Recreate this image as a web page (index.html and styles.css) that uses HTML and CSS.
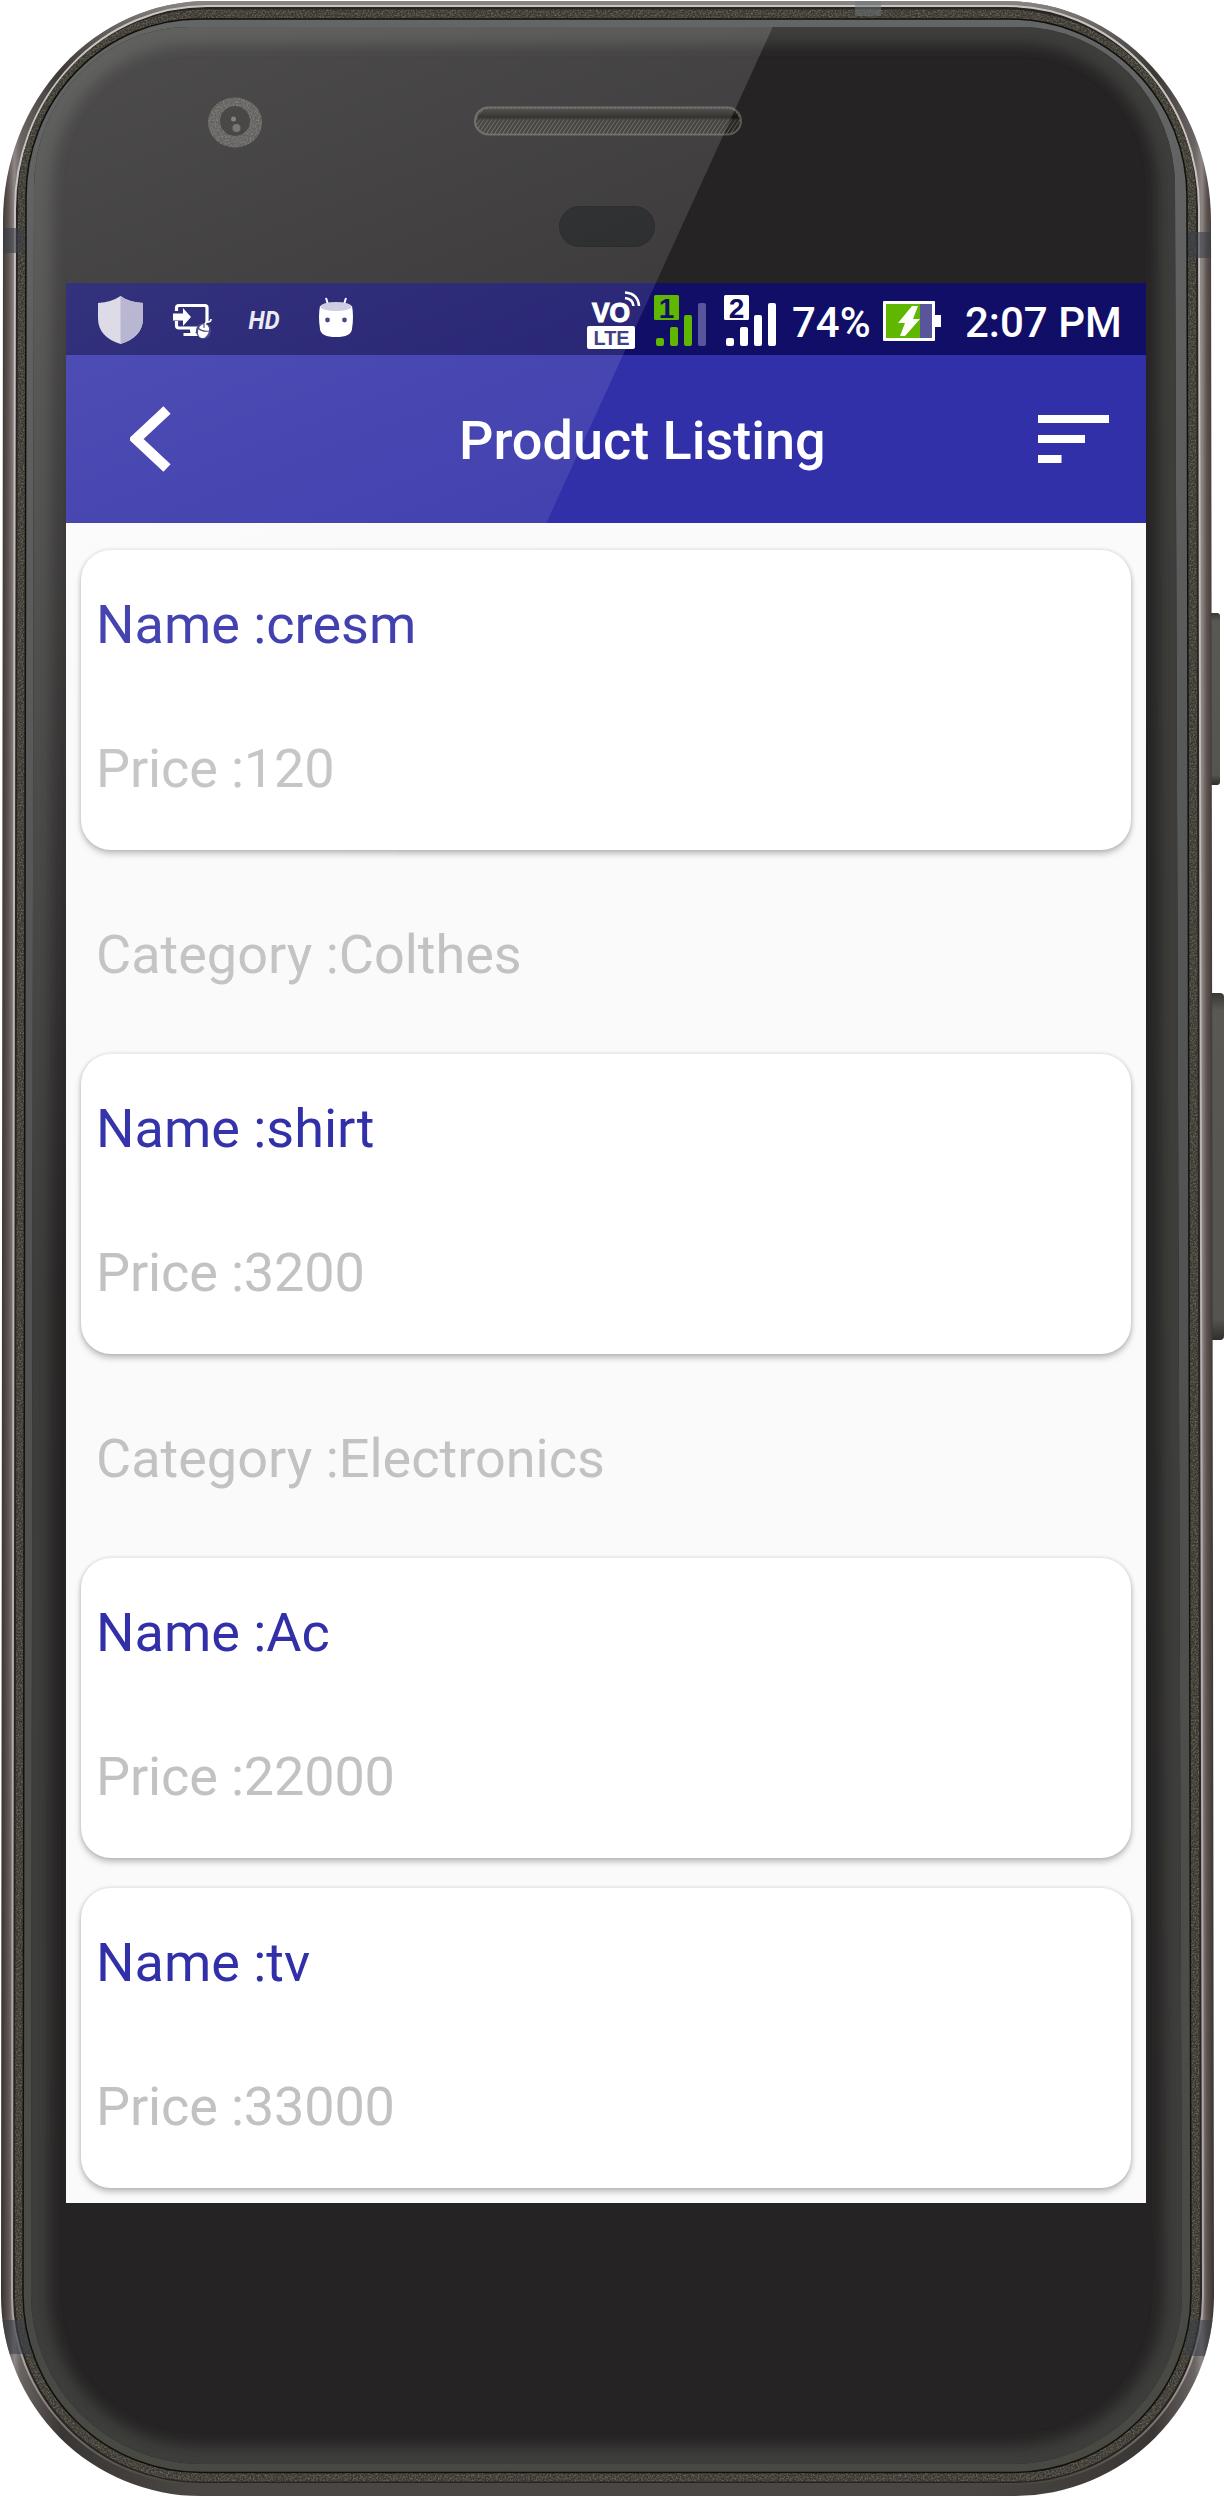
FILE: index.html
```html
<!DOCTYPE html>
<html lang="en">
<head>
<meta charset="utf-8">
<title>Product Listing</title>
<link rel="stylesheet" href="styles.css">
</head>
<body>
<div class="device">
  <svg class="device-body" viewBox="0 0 1224 2498" aria-hidden="true">
    <defs>
      <linearGradient id="metal" x1="0" x2="1" y1="0" y2="0">
        <stop offset="0" stop-color="#37322f"/><stop offset=".006" stop-color="#5d5451"/><stop offset=".011" stop-color="#8e8786"/><stop offset=".016" stop-color="#6a6463"/>
        <stop offset=".05" stop-color="#3a3633"/><stop offset=".16" stop-color="#4a4644"/><stop offset=".8" stop-color="#4a4644"/><stop offset=".95" stop-color="#3a3633"/>
        <stop offset=".984" stop-color="#6a6463"/><stop offset=".99" stop-color="#8e8786"/><stop offset=".994" stop-color="#5d5451"/><stop offset="1" stop-color="#37322f"/>
      </linearGradient>
      <linearGradient id="topShine" x1="0" x2="0" y1="0" y2="1">
        <stop offset="0" stop-color="#a09a98" stop-opacity=".75"/><stop offset=".03" stop-color="#777" stop-opacity="0"/><stop offset="1" stop-color="#2d2824" stop-opacity="0"/>
      </linearGradient>
      <linearGradient id="edge" x1="0" x2="0" y1="0" y2="1">
        <stop offset="0" stop-color="#c9c5c3"/><stop offset=".95" stop-color="#aaa5a3"/><stop offset="1" stop-color="#4a4642"/>
      </linearGradient>
      <linearGradient id="lip" x1="0" x2="0" y1="0" y2="1">
        <stop offset="0" stop-color="#646565"/><stop offset=".4" stop-color="#545555"/><stop offset="1" stop-color="#484943"/>
      </linearGradient>
      <linearGradient id="button" x1="0" x2="0" y1="0" y2="1">
        <stop offset="0" stop-color="#3a3833"/><stop offset=".05" stop-color="#595853"/><stop offset=".94" stop-color="#55544f"/><stop offset="1" stop-color="#302e2b"/>
      </linearGradient>
      <linearGradient id="grille" x1="0" x2="0" y1="0" y2="1">
        <stop offset="0" stop-color="#34322f"/><stop offset=".35" stop-color="#15120f"/><stop offset=".5" stop-color="#302e2b" stop-opacity=".4"/><stop offset="1" stop-color="#302e2b" stop-opacity="0"/>
      </linearGradient>
      <pattern id="mesh" width="4" height="6" patternUnits="userSpaceOnUse"><rect width="4" height="6" fill="#282622"/><path d="M-1 7L5-2M-5 7L1-2M3 7L9-2" stroke="#6a6662" stroke-width="1"/></pattern>
      <filter id="grain" x="0" y="0" width="100%" height="100%" color-interpolation-filters="sRGB">
        <feTurbulence type="fractalNoise" baseFrequency=".6" numOctaves="2" result="n"/>
        <feColorMatrix in="n" values="0 0 0 0 .46  0 0 0 0 .45  0 0 0 0 .4  1.8 0 0 0 -.65"/>
        <feComposite in2="SourceGraphic" operator="in" result="g"/>
        <feMerge><feMergeNode in="SourceGraphic"/><feMergeNode in="g"/></feMerge>
      </filter>
      <filter id="soft" x="-5%" y="-5%" width="110%" height="110%"><feGaussianBlur stdDeviation="7"/></filter>
      <path id="glass" d="M34 187A155 160 0 0 1 189 27H1020A155 160 0 0 1 1175 187L1182 2294A170 170 0 0 1 1012 2464H201A170 170 0 0 1 31 2294Z"/>
      <clipPath id="glassClip"><use href="#glass"/></clipPath>
      <clipPath id="shellClip"><path id="shell" d="M3 221A205 220 0 0 1 208 1H1006A205 220 0 0 1 1211 221L1214 2296A200 200 0 0 1 1014 2496H201A200 200 0 0 1 1 2296Z"/></clipPath>
    </defs>
    <rect x="1206" y="613" width="14" height="172" rx="3" fill="url(#button)"/>
    <rect x="1206" y="993" width="18" height="347" rx="4" fill="url(#button)"/>
    <use href="#shell" fill="url(#metal)"/>
    <use href="#shell" fill="url(#topShine)"/>
    <path d="M15 209A192 203 0 0 1 207 6H1007A192 203 0 0 1 1199 209L1203 2296A188 188 0 0 1 1015 2484H200A188 188 0 0 1 12 2296Z" fill="#282421" stroke="url(#edge)" stroke-width="2"/>
    <path d="M18 200A186 191 0 0 1 204 9.500H1006A190 191 0 0 1 1196 200L1200 2296A186 186 0 0 1 1014 2481.500H201A186 186 0 0 1 15 2296Z" fill="#393630" filter="url(#grain)"/>
    <g clip-path="url(#shellClip)">
      <path d="M0 228h24v25H0zM1188 232h30v26h-30zM0 2320h32v34H0zM1186 2320h30v36h-30z" fill="#3a3f47" fill-opacity=".6"/>
      <path d="M855 0h26v16h-26z" fill="#70757a" fill-opacity=".5"/>
    </g>
    <path d="M26 197A173 178 0 0 1 199 19H1010A177 178 0 0 1 1187 197L1191 2295A178 178 0 0 1 1013 2472.500H201A178 178 0 0 1 23 2295Z" fill="url(#lip)" stroke="#11100d" stroke-width="1.500"/>
    <use href="#glass" fill="#252323"/>
    <g clip-path="url(#glassClip)"><use href="#glass" fill="none" stroke="#3e3d3b" stroke-width="36" filter="url(#soft)"/></g>
    <ellipse cx="235" cy="122.500" rx="27" ry="25" fill="#454242" filter="url(#grain)"/>
    <circle cx="235" cy="121" r="15" fill="#272423"/>
    <circle cx="233.500" cy="119" r="2.500" fill="#6b6969"/><circle cx="236.500" cy="128" r="4" fill="#5f5c5b"/>
    <rect x="475" y="107.500" width="266" height="27" rx="13.500" fill="url(#mesh)" stroke="#5b5857" stroke-width="2"/>
    <rect x="477" y="109" width="262" height="24" rx="12" fill="url(#grille)"/>
    <rect x="559.500" y="206.500" width="95" height="40" rx="20" fill="#111315" stroke="#100e0d"/>
  </svg>

  <main class="screen">
    <header class="status-bar">
      <svg class="shield" viewBox="98 296 45 48"><path d="M120.500 296q8 6 22.500 7v15q0 19-22.500 26Q98 337 98 318v-15q14-1 22.500-7z" fill="#d7d5e3"/><path d="M120.500 296q8 6 22.500 7v15q0 19-22.500 26z" fill="#adabcb"/></svg>
      <svg class="remote" viewBox="173 303 39 36"><path d="M176.500 311v-3q0-2.500 2.500-2.500h26q2 0 2 2v15M176.500 321v4.500q0 2.500 2.500 2.500h19" fill="none" stroke="#fff" stroke-width="3.200"/><path d="M173 313.500h10v-5.500l8 9-8 9v-5.500h-10zM189.500 328h7v4h-1v1h3v3h-15v-3h7z" fill="#fff"/><ellipse cx="203.500" cy="331" rx="7.500" ry="8" fill="#302f7a"/><ellipse cx="203.500" cy="331" rx="5.300" ry="7.300" transform="rotate(20 203.500 331)" fill="#fff"/><path d="M205 325q0-3 3-3t3-3" fill="none" stroke="#fff" stroke-width="1.600"/><path d="M198 328q4 4 11 3M204 324v4" fill="none" stroke="#302f7a" stroke-width="1.100"/></svg>
      <svg class="hd" viewBox="246 300 40 36"><text x="248.500" y="329" textLength="31" lengthAdjust="spacingAndGlyphs">HD</text></svg>
      <svg class="robot" viewBox="318 296 36 42"><path d="M326 298l2.500 8M346 298l-2.500 8" stroke="#fff" stroke-width="2"/><path d="M320 306h32q2 10 0 23-1 8-16 8t-16-8q-2-13 0-23z" fill="#fff"/><ellipse cx="336" cy="306.500" rx="15.500" ry="4.500" fill="#c7c6de"/><circle cx="327.500" cy="320" r="2.400" fill="#302f7a"/><circle cx="344.500" cy="320" r="2.400" fill="#302f7a"/></svg>
      <svg class="volte" viewBox="587 290 54 60"><rect x="587" y="326" width="48" height="23" rx="2" fill="#fff"/><text class="vo" x="592" y="322" textLength="38" lengthAdjust="spacingAndGlyphs">VO</text><text class="lte" x="593.500" y="345" textLength="36" lengthAdjust="spacingAndGlyphs">LTE</text><path d="M625 292.500q13 1 14 13.500M625 298q8 1 8.500 8" fill="none" stroke="#fff" stroke-width="2.600"/></svg>
      <svg class="sim" viewBox="654 294 53 53"><rect x="654" y="295" width="25" height="25" rx="1.500" fill="#5fb700"/><rect x="656" y="338" width="8" height="8" rx="2" fill="#5fb700"/><rect x="670" y="327" width="8" height="19" rx="2" fill="#5fb700"/><rect x="684" y="315" width="8" height="31" rx="2" fill="#5fb700"/><rect x="698" y="303" width="8" height="43" rx="2" fill="#58559b"/><text class="sim-no" x="666.500" y="318">1</text></svg>
      <svg class="sim sim-two" viewBox="724 294 53 53"><g fill="#fff"><rect x="724" y="295" width="25" height="25" rx="1.500"/><rect x="726" y="338" width="8" height="8" rx="2"/><rect x="740" y="327" width="8" height="19" rx="2"/><rect x="754" y="315" width="8" height="31" rx="2"/><rect x="768" y="303" width="8" height="43" rx="2"/></g><text class="sim-no" x="736.500" y="318">2</text></svg>
      <span class="percent">74%</span>
      <svg class="battery" viewBox="883 301 58 40"><rect x="883" y="301" width="52" height="40" rx="1" fill="#fff"/><path d="M935 315h6v12h-6z" fill="#fff"/><path d="M886 304h34v34h-34z" fill="#5fb700"/><path d="M920 304h12v34h-12z" fill="#58559b"/><path d="M912 306h6l-5 13h7l-15 17h-5l5-13h-7z" fill="#fff"/></svg>
      <time class="clock">2:07 PM</time>
    </header>

    <nav class="app-bar">
      <svg class="back" viewBox="0 0 42 66"><path d="M37 4L6 33l31 29" fill="none" stroke="#fff" stroke-width="10.500"/></svg>
      <h1 class="title">Product Listing</h1>
      <svg class="sort" viewBox="0 0 71 48"><path d="M0 0h71v8H0zM0 20h47v8H0zM0 40h23.500v8H0z" fill="#fff"/></svg>
    </nav>

    <section class="products">
      <article class="card"><p class="name">Name :cresm</p><p class="price">Price :120</p></article>
      <h2 class="category">Category :Colthes</h2>
      <article class="card"><p class="name">Name :shirt</p><p class="price">Price :3200</p></article>
      <h2 class="category">Category :Electronics</h2>
      <article class="card"><p class="name">Name :Ac</p><p class="price">Price :22000</p></article>
      <article class="card card-next"><p class="name">Name :tv</p><p class="price">Price :33000</p></article>
    </section>
  </main>

  <svg class="glare" viewBox="0 0 1224 2498" aria-hidden="true">
    <defs>
      <linearGradient id="sheen" gradientUnits="userSpaceOnUse" x1="0" y1="0" x2="451" y2="1135"><stop offset="0" stop-color="#fff" stop-opacity=".195"/><stop offset="1" stop-color="#fff" stop-opacity="0"/></linearGradient>
    </defs>
    <path d="M0 0H785L0 1720Z" fill="url(#sheen)" clip-path="url(#glassClip)"/>
  </svg>
</div>
</body>
</html>
```
FILE: styles.css
```css
* { box-sizing: border-box; }

body {
  margin: 0;
  background: #fff;
  font-family: Roboto, "Liberation Sans", sans-serif;
}

.device {
  position: relative;
  width: 1224px;
  height: 2498px;
  padding: 283px 78px 295px 66px;
  overflow: hidden;
}

/* Phone artwork sits behind the screen, the reflection above it */
.device-body,
.glare {
  position: absolute;
  inset: 0;
  width: 100%;
  height: 100%;
}

.glare { pointer-events: none; }

.screen {
  position: relative;
  width: 1080px;
  height: 1920px;
  overflow: hidden;
  background: #fafafa;
}

.status-bar {
  display: flex;
  align-items: flex-start;
  height: 72px;
  padding-left: 32px;
  background: #100e66;
  color: #fff;
  white-space: nowrap;
}

.status-bar svg { flex: none; }
.shield { width: 45px; height: 48px; margin-top: 13px; }
.remote { width: 39px; height: 36px; margin: 20px 0 0 30px; }
.hd { width: 40px; height: 36px; margin: 17px 0 0 34px; }
.robot { width: 36px; height: 42px; margin: 13px 0 0 32px; }
.volte { width: 54px; height: 60px; margin: 7px 0 0 233px; }
.sim { width: 53px; height: 53px; margin: 11px 0 0 13px; }
.sim-two { margin-left: 17px; }
.battery { width: 58px; height: 40px; margin-top: 18px; }

.hd text { fill: #e9e8f2; font: italic 700 26px Roboto, sans-serif; }
.vo { fill: #fff; stroke: #fff; stroke-width: 1.2px; font: 700 27px "Liberation Sans", sans-serif; }
.lte { fill: #2b2a74; font: 700 20px "Liberation Sans", sans-serif; }
.sim-no { fill: #100e66; font: 700 28px "Liberation Sans", sans-serif; text-anchor: middle; }

.percent,
.clock {
  font-size: 42px;
  font-weight: 500;
  line-height: 50px;
  margin-top: 15px;
}

.percent { width: 92px; margin-left: 15px; }
.clock { margin-left: 23px; }
.battery { margin-left: -1px; }
.clock { padding-left: 1px; }

.app-bar {
  display: flex;
  align-items: center;
  height: 168px;
  padding: 0 37px 0 64px;
  background: #3130a8;
  color: #fff;
}

.back { width: 42px; height: 66px; }

.title {
  margin: 4px 0 0 287px;
  font-size: 54px;
  font-weight: 500;
  line-height: 64px;
  white-space: nowrap;
}

.sort { width: 71px; height: 48px; margin-left: auto; }

.products {
  display: flex;
  flex-direction: column;
  padding: 27px 15px 0;
}

.card {
  flex: none;
  display: flex;
  flex-direction: column;
  gap: 80px;
  height: 300px;
  padding: 43px 15px 0;
  border-radius: 30px;
  background: #fff;
  box-shadow: 0 4px 6px rgba(0, 0, 0, .23), 0 0 4px rgba(0, 0, 0, .14);
}

.card-next { margin-top: 30px; }

.name,
.price,
.category {
  margin: 0;
  font-size: 54px;
  font-weight: 400;
  line-height: 64px;
  white-space: nowrap;
}

.name { color: #3130a8; }
.price, .category { color: #c2c2c2; }
.price { letter-spacing: -.15px; }

.category {
  height: 204px;
  padding: 73px 15px 0;
}
```
